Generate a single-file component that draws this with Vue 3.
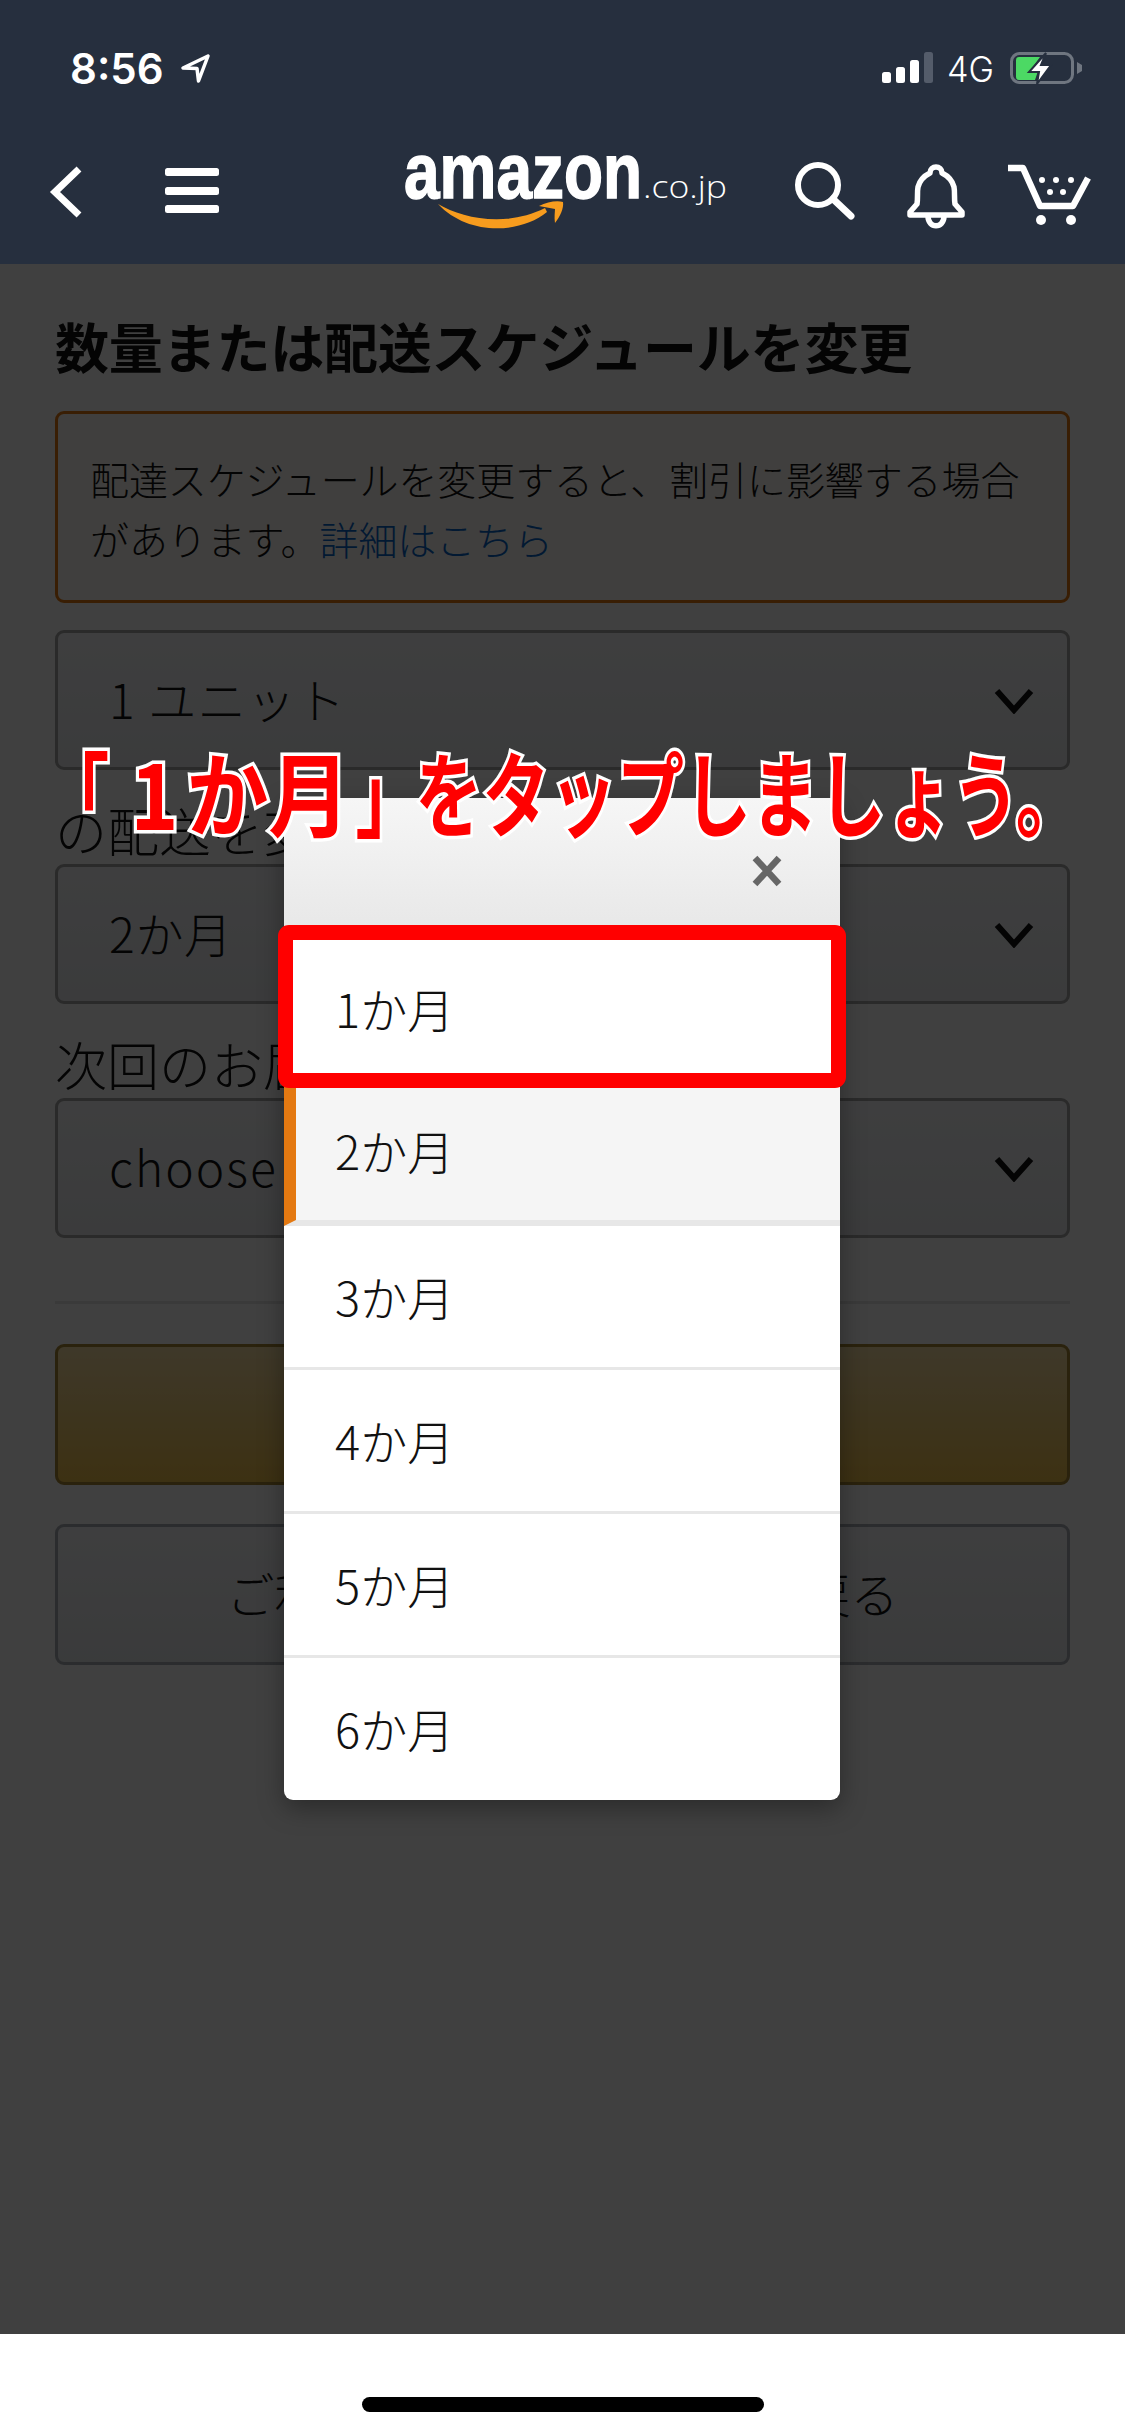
<template>
  <div class="screen">
    <header class="top">
      <div class="status">
        <span class="time">8:56</span>
        <svg class="loc" viewBox="176 50 40 38">
          <path d="M208 57 L183 69 L197 69.5 L198.5 82 Z" fill="none" stroke="#fff" stroke-width="3.5" stroke-linejoin="round" />
        </svg>
        <svg class="sys" viewBox="880 48 205 42">
          <rect x="882" y="73" width="9" height="11" rx="2.5" fill="#fff" />
          <rect x="896" y="68" width="9" height="16" rx="2.5" fill="#fff" />
          <rect x="910" y="61" width="9" height="23" rx="2.5" fill="#fff" />
          <rect x="924" y="53" width="9" height="31" rx="2.5" fill="#545c6a" />
          <text x="947" y="83" class="sys-text" textLength="47" lengthAdjust="spacingAndGlyphs">4G</text>
          <rect x="1011.5" y="54.5" width="61" height="29" rx="8" fill="none" stroke="#6f7680" stroke-width="3" />
          <path d="M1077 63 L1082 66 V72 L1077 75 Z" fill="#6f7680" />
          <path d="M1019 58 H1040 L1030 72 H1038 L1035 81 H1019 A3 3 0 0 1 1016 78 V61 A3 3 0 0 1 1019 58 Z" fill="#4cd964" />
          <path d="M1046 54 L1029 73 L1039 73 L1037 85 L1051 66 L1041 66 Z" fill="#fff" stroke="#262f3e" stroke-width="2" />
        </svg>
      </div>
      <nav class="nav">
        <svg class="ic back" viewBox="40 136 50 128">
          <path d="M79 169 L55 192 L79 215" fill="none" stroke="#fff" stroke-width="7" />
        </svg>
        <svg class="ic menu" viewBox="160 136 65 128">
          <rect x="165" y="168" width="54" height="8" rx="2.5" fill="#fff" />
          <rect x="165" y="187" width="54" height="8" rx="2.5" fill="#fff" />
          <rect x="165" y="205" width="54" height="8" rx="2.5" fill="#fff" />
        </svg>
        <svg class="ic logo" viewBox="400 136 335 128">
          <text x="404" y="198" class="logo-main" textLength="238" lengthAdjust="spacingAndGlyphs">amazon</text>
          <text x="643" y="198" class="logo-tld" textLength="84" lengthAdjust="spacingAndGlyphs">.co.jp</text>
          <path d="M438 204 C462 218 505 228 545 208 L547 212 C520 234 468 236 438 204 Z" fill="#f79c1e" />
          <path d="M539 206 C547 202 557 200 563 202 C564 208 560 217 555 223 C554 217 555 212 555 209 C550 208 544 207 539 206 Z" fill="#f79c1e" />
        </svg>
        <svg class="ic search" viewBox="790 136 70 128">
          <circle cx="818" cy="185" r="20" fill="none" stroke="#fff" stroke-width="6" />
          <path d="M833 199 L851 216" fill="none" stroke="#fff" stroke-width="7" stroke-linecap="round" />
        </svg>
        <svg class="ic bell" viewBox="900 136 70 128">
          <path d="M910 215 V212 L917 204 C918 198 917 192 918 187 C920 179 926 175 930 173 C930 169 933 167 936 167 C939 167 942 169 942 173 C946 175 952 179 954 187 C955 192 954 198 955 204 L962 212 V215 Z" fill="none" stroke="#fff" stroke-width="5.5" stroke-linejoin="round" />
          <path d="M928 216 C928 229 944 229 944 216" fill="none" stroke="#fff" stroke-width="5.5" />
        </svg>
        <svg class="ic cart" viewBox="1000 136 95 128">
          <path d="M1008 168 H1023 L1040 206 H1073 L1088 178" fill="none" stroke="#fff" stroke-width="6.5" stroke-linejoin="round" />
          <circle cx="1041" cy="220" r="5" fill="#fff" />
          <circle cx="1071" cy="220" r="5" fill="#fff" />
          <circle cx="1042" cy="180" r="3" fill="#fff" />
          <circle cx="1056" cy="180" r="3" fill="#fff" />
          <circle cx="1071" cy="180" r="3" fill="#fff" />
          <circle cx="1050" cy="192" r="3" fill="#fff" />
          <circle cx="1063" cy="192" r="3" fill="#fff" />
        </svg>
      </nav>
    </header>

    <main class="page">
      <h1 class="title">数量または配送スケジュールを変更</h1>
      <div class="alert">
        配達スケジュールを変更すると、割引に影響する場合があります。<a class="link">詳細はこちら</a>
      </div>

      <div class="select first">
        <span class="unit">1 ユニット</span>
        <svg class="chev" viewBox="0 0 40 26"><path d="M3 3 L20 22 L37 3" fill="none" stroke="#111" stroke-width="6" /></svg>
      </div>
      <p class="label">の配送を変更</p>
      <div class="select">
        <span class="interval">2か月</span>
        <svg class="chev" viewBox="0 0 40 26"><path d="M3 3 L20 22 L37 3" fill="none" stroke="#111" stroke-width="6" /></svg>
      </div>
      <p class="label">次回のお届け日</p>
      <div class="select">
        <span class="latin">choose</span>
        <svg class="chev" viewBox="0 0 40 26"><path d="M3 3 L20 22 L37 3" fill="none" stroke="#111" stroke-width="6" /></svg>
      </div>

      <hr class="rule" />
      <div class="btn primary"></div>
      <div class="btn secondary">ご利用中の定期おトク便に戻る</div>

      <div class="dim"></div>

      <section class="modal">
        <div class="modal-head">
          <svg class="close" viewBox="0 0 30 32">
            <path d="M3 3 L27 29 M27 3 L3 29" fill="none" stroke="#666" stroke-width="6.5" />
          </svg>
        </div>
        <div class="list">
          <div
            v-for="m in months"
            :key="m"
            class="item"
            :class="{ current: m === 2 }"
          >{{ m }}か月</div>
        </div>
        <div class="highlight"></div>
      </section>

      <div class="note">
        <span>「</span><span class="wide one">1</span><span class="wide ka">か</span><span class="wide tsuki">月</span><span class="close-br">」</span><span class="rest">をタップしましょう。</span>
      </div>
    </main>

    <footer class="home"><div class="home-bar"></div></footer>
  </div>
</template>

<script setup>
const months = [1, 2, 3, 4, 5, 6]
</script>

<style>
html, body {
  margin: 0;
  background: #fff;
}
</style>

<style scoped>
.screen {
  position: relative;
  width: 1125px;
  height: 2436px;
  overflow: hidden;
  background: #fff;
  font-family: "Noto Sans CJK JP", "Noto Sans", sans-serif;
  font-weight: 300;
  color: #111;
}

/* header */
.top {
  height: 264px;
  background: #262f3e;
}

.status {
  display: flex;
  align-items: center;
  height: 136px;
  padding-left: 70px;
}

.time {
  width: 106px;
  font-family: Inter, sans-serif;
  font-size: 42px;
  font-weight: 600;
  color: #fff;
}

.loc {
  width: 40px;
  height: 38px;
}

.sys {
  width: 205px;
  height: 42px;
  margin-left: 664px;
}

.sys-text {
  font-family: Inter, sans-serif;
  font-size: 36px;
  fill: #fff;
}

.nav {
  display: flex;
  height: 128px;
}

.ic {
  display: block;
  height: 128px;
  flex: none;
}

.back { width: 50px; margin-left: 40px; }
.menu { width: 65px; margin-left: 70px; }
.logo { width: 335px; margin-left: 175px; }
.search { width: 70px; margin-left: 55px; }
.bell { width: 70px; margin-left: 40px; }
.cart { width: 95px; margin-left: 30px; }

.logo-main {
  font-family: "Liberation Sans", sans-serif;
  font-size: 78px;
  font-weight: 700;
  fill: #fff;
  stroke: #fff;
  stroke-width: 1.5px;
}

.logo-tld {
  font-family: "Open Sans", sans-serif;
  font-size: 32px;
  fill: #fff;
}

/* page under the dim layer */
.page {
  position: relative;
  height: 2070px;
  padding: 52px 55px 0;
  box-sizing: border-box;
}

.title {
  margin: 0 0 35px;
  font-size: 54px;
  line-height: 60px;
  font-weight: 700;
  letter-spacing: -0.2px;
  white-space: nowrap;
}

.alert {
  box-sizing: border-box;
  height: 192px;
  padding: 34px 32px 0;
  border: 3px solid #e47911;
  border-radius: 9px;
  background: #fffcf8;
  font-size: 39px;
  line-height: 60px;
  letter-spacing: -0.1px;
}

.link {
  color: #0a66c8;
}

.select {
  display: flex;
  align-items: center;
  justify-content: space-between;
  box-sizing: border-box;
  height: 140px;
  padding: 0 33px 0 51px;
  border: 3px solid #a6a6a6;
  border-radius: 9px;
  background: linear-gradient(#f7f8fa, #e9ebee);
  font-size: 48px;
}

.select.first {
  margin-top: 27px;
}

.select > span {
  position: relative;
  top: -2px;
}

.unit { letter-spacing: 1.5px; }
.interval { letter-spacing: 0.7px; }
.latin { letter-spacing: 2px; }

.chev {
  width: 40px;
  height: 26px;
  margin-top: 2px;
}

.label {
  margin: 30px 0 4px;
  font-size: 52px;
  line-height: 60px;
  white-space: nowrap;
}

.rule {
  height: 3px;
  margin: 63px 0 40px;
  border: 0;
  background: #e7e7e7;
}

.btn {
  box-sizing: border-box;
  height: 141px;
  border: 3px solid;
  border-radius: 9px;
}

.primary {
  border-color: #a88734;
  background: linear-gradient(#f7dfa5, #f0c14b);
}

.secondary {
  display: flex;
  align-items: center;
  justify-content: center;
  margin-top: 39px;
  padding-bottom: 5px;
  border-color: #adb1b8;
  background: linear-gradient(#f7f8fa, #e7e9ec);
  font-size: 48px;
  white-space: nowrap;
}

.dim {
  position: absolute;
  inset: 0;
  background: rgba(0, 0, 0, 0.75);
}

/* month picker */
.modal {
  position: absolute;
  left: 284px;
  top: 534px;
  width: 556px;
  border-radius: 0 0 9px 9px;
  background: #fff;
  box-shadow: 0 8px 26px rgba(0, 0, 0, 0.35);
}

.modal-head {
  display: flex;
  justify-content: flex-end;
  box-sizing: border-box;
  height: 140px;
  padding: 57px 58px 0 0;
  background: linear-gradient(#f6f6f6, #e7e7e7);
}

.close {
  width: 30px;
  height: 32px;
}

.item {
  display: flex;
  align-items: center;
  box-sizing: border-box;
  height: 144px;
  padding: 0 0 3px 51px;
  border-bottom: 3px solid #e7e7e7;
  font-size: 47px;
}

.item.current {
  padding-left: 39px;
  border-left: 12px solid #e47911;
  border-bottom-width: 6px;
  background: #f5f5f5;
}

.item:last-child {
  height: 142px;
  border-bottom: 0;
}

.highlight {
  position: absolute;
  left: -6px;
  top: 127px;
  width: 568px;
  height: 163px;
  box-sizing: border-box;
  border: 15px solid #f00;
  border-radius: 11px;
}

/* red caption over everything */
.note {
  position: absolute;
  left: 42px;
  top: 470px;
  display: flex;
  font-size: 92px;
  line-height: 112px;
  font-weight: 700;
  color: #f00;
  white-space: nowrap;
  -webkit-text-stroke: 7px #fff;
  paint-order: stroke fill;
  transform: scaleX(0.73);
  transform-origin: left center;
}

.wide {
  transform: scaleX(1.22);
  transform-origin: left center;
}

.one { margin-left: 29px; }
.ka { margin-left: 23px; }
.tsuki { margin-left: 20px; }
.close-br { margin-left: 27px; }
.rest { margin-left: -10px; }

.home {
  display: flex;
  justify-content: center;
  height: 102px;
  padding-top: 63px;
  box-sizing: border-box;
}

.home-bar {
  width: 402px;
  height: 15px;
  border-radius: 8px;
  background: #000;
}
</style>
